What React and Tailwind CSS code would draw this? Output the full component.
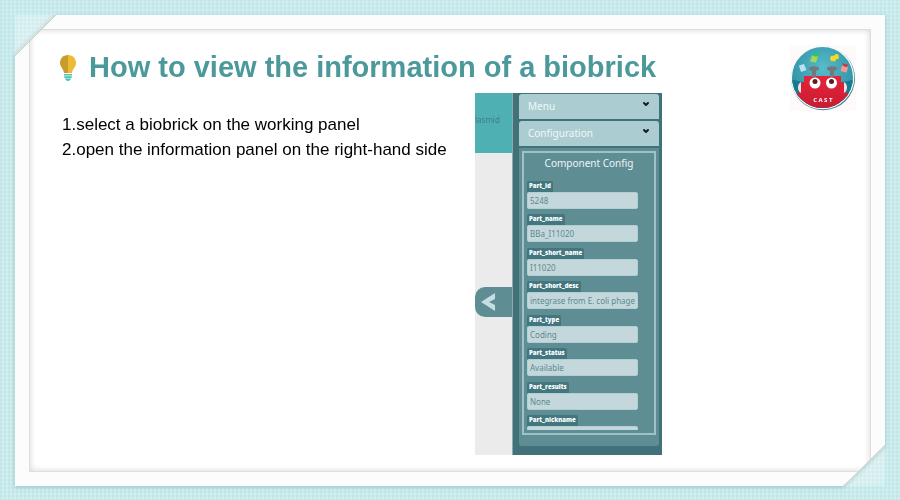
import React from "react";
import { ChevronDown } from "lucide-react";

const fields = [
  ["Part_id", "5248"],
  ["Part_name", "BBa_I11020"],
  ["Part_short_name", "I11020"],
  ["Part_short_desc", "integrase from E. coli phage lambda"],
  ["Part_type", "Coding"],
  ["Part_status", "Available"],
  ["Part_results", "None"],
  ["Part_nickname", ""],
];

function Bulb() {
  return (
    <svg className="h-[28px] w-[18px] shrink-0" viewBox="0 0 18 28" aria-hidden="true">
      <path d="M9 1C4 1 1 4.600 1 9c0 4 3.500 5.500 4 10h4z" fill="#c99d2c" />
      <path d="M9 1c5 0 8 3.600 8 8 0 4-3.500 5.500-4 10H9z" fill="#eeb933" />
      <path d="M5 20h8v1.600H5zM5 22.300h8l-.6 1.600H5.600zM6 24.600h6c-.5 1.500-1.500 2.400-3 2.400s-2.500-.9-3-2.400z" fill="#4cc3b2" />
    </svg>
  );
}

function Logo() {
  return (
    <svg className="h-[66px] w-[66px] shrink-0 bg-[#fefafa]" viewBox="0 0 66 66" role="img" aria-label="CAST">
      <defs>
        <radialGradient id="sky" cx="50%" cy="35%" r="65%">
          <stop offset="0" stopColor="#58bccb" />
          <stop offset="1" stopColor="#26899d" />
        </radialGradient>
        <linearGradient id="red" x1="0" y1="0" x2="0" y2="1">
          <stop offset="0" stopColor="#e42439" />
          <stop offset="1" stopColor="#c41a32" />
        </linearGradient>
        <clipPath id="disc"><circle cx="32.500" cy="32.500" r="30.500" /></clipPath>
      </defs>
      <circle cx="33" cy="33.300" r="32" fill="#41798c" />
      <circle cx="32.500" cy="32.500" r="31.800" fill="#f7fbfc" />
      <g clipPath="url(#disc)">
        <rect width="66" height="66" fill="url(#sky)" />
        <path d="M0 34Q33 44 66 34V66H0z" fill="#137c91" />
        <path d="M14 31h37v17h12v20H2V48h12z" fill="url(#red)" />
        <path d="M14 37v11h-3c-4-2-4-8 0-10zM51 37v11h3c4-2 4-8 0-10z" fill="#d92238" />
        <path d="M11 37c-4 2-4 9 0 11zM54 37c4 2 4 9 0 11z" fill="#f3dfe0" />
      </g>
      <path d="M19 22.500q5-2.500 10 0v2l-3 1.500v6h-4v-6l-3-1.500zM37 22.500q5-2.500 10 0v2l-3 1.500v6h-4v-6l-3-1.500z" fill="#74777b" />
      <path d="M9 20.500l5-1.500 2.500 6-5.500 2z" fill="#b9e0f5" />
      <path d="M22 10.500l6 1-2 6-6-1z" fill="#a3d65a" />
      <path d="M23 10c2-3 6-2 7 1l-3-1-1 2z" fill="#20cf4c" />
      <path d="M41 11l3.500-.5 1-1.500 3 .5.500 4-3 1-1 2-4-.5-1-3z" fill="#f4d927" />
      <path d="M52 20.500l6 2-1.500 5-6-1.500z" fill="#f59a97" />
      <path d="M52 18l3 1.500 3-.5-1.500 3-3-1z" fill="#e52835" />
      <circle cx="25" cy="38" r="5.500" fill="#fff" />
      <circle cx="41.500" cy="38" r="5.500" fill="#fff" />
      <circle cx="25" cy="36.500" r="2.500" fill="#5b201d" />
      <circle cx="41.500" cy="36.500" r="2.500" fill="#5b201d" />
      <text x="33.500" y="57" textAnchor="middle" fontFamily="Open Sans, sans-serif" fontWeight="700" fontSize="6" letterSpacing="1.500" fill="#fff">CAST</text>
    </svg>
  );
}

function Fold({ className }) {
  return (
    <svg className={className} viewBox="0 0 42 42" aria-hidden="true">
      <defs>
        <linearGradient id="fold" x1="0" y1="0" x2="1" y2="1">
          <stop offset="0" stopColor="#fff" stopOpacity=".25" />
          <stop offset=".4" stopColor="#fff" stopOpacity=".3" />
          <stop offset=".5" stopColor="#d3dcde" stopOpacity=".6" />
        </linearGradient>
      </defs>
      <path d="M0 0h42L0 42z" fill="url(#fold)" />
      <path d="M42 0L0 42" stroke="#cfcfd1" strokeWidth="1" />
    </svg>
  );
}

function Accordion({ title }) {
  return (
    <button className="flex h-[25px] w-full items-center justify-between rounded-t-[3px] bg-[#abcdd2] pr-2 pl-[9px] text-left text-[10px] text-[#f1f7f8]">
      <span>{title}</span>
      <ChevronDown className="mb-[5px] h-2 w-2.5 text-[#151d20]" strokeWidth={6} />
    </button>
  );
}

function AppPanel() {
  return (
    <section className="flex h-[362px] w-[187px] shrink-0 overflow-hidden bg-[#417179] font-['Noto_Sans','Open_Sans',sans-serif]">
      <div className="flex w-[37px] flex-col bg-[#ebebeb]">
        <div className="h-[60px] overflow-hidden bg-[#4fb0b3] pt-5 text-[8px] leading-[14px] text-[#3d7e84]">lasmid</div>
        <button aria-label="Collapse panel" className="mt-[134px] flex h-[30px] items-center rounded-l-[10px] bg-[#5f8d94] pl-[6px]">
          <svg className="h-[18px] w-[14px]" viewBox="0 0 14 18" aria-hidden="true">
            <path d="M14 0v6L8 9l6 3v6L0 9z" fill="#c6dde1" />
          </svg>
        </button>
      </div>
      <div className="flex min-w-0 flex-1 flex-col gap-[2px] border-l border-[#8fa9ae] pt-px pr-[3px] pb-[9px] pl-[6px]">
        <Accordion title="Menu" />
        <Accordion title="Configuration" />
        <div className="flex-1 rounded-b-[3px] bg-[#5f8d94] px-[3px] pt-[3px]">
          <div className="h-[284px] border-2 border-[#9fc2c7] px-[3px]">
            <h2 className="pt-[2px] text-center text-[10px] leading-4 text-[#edf5f6]">Component Config</h2>
            <form className="mt-[10px] flex h-[249px] flex-col justify-between overflow-hidden">
              {fields.map(([name, value], i) => (
                <div key={name} className={i === 7 ? "h-[15px] shrink-0 overflow-hidden" : "shrink-0"}>
                  <label htmlFor={name} className="block h-[11px] w-fit rounded-t-[2px] bg-[#437780] px-[2px] font-['Open_Sans',sans-serif] text-[6px] leading-[10px] font-extrabold text-white">{name}</label>
                  <input id={name} defaultValue={value} className="block h-[17px] w-[111px] rounded-[2px] border border-[#b0d0d4] bg-[#c4d8dc] px-[2px] text-[8px] leading-[14px] text-[#5c898f] outline-none" />
                </div>
              ))}
            </form>
          </div>
        </div>
      </div>
    </section>
  );
}

export default function App() {
  return (
    <div className="flex min-h-screen flex-col bg-[#d3f0f1] bg-[repeating-linear-gradient(0deg,#b5dfe355_0_2px,transparent_2px_4px),repeating-linear-gradient(90deg,#b0dce155_0_2px,transparent_2px_4px)] p-[15px]">
      <div className="relative flex flex-1 flex-col">
        <div className="flex flex-1 flex-col drop-shadow-[0_1px_2px_#648f9477]">
          <div className="flex flex-1 flex-col bg-[#fcfcfc] p-[14px] [clip-path:polygon(41px_0,100%_0,100%_calc(100%-40px),calc(100%-42px)_100%,0_100%,0_40px)]">
            <main className="flex flex-1 items-start justify-between border border-[#dedede] bg-white pt-[15px] pr-[14px] pb-4 pl-[29px] shadow-[inset_0_0_6px_#d4d4d4]">
              <div className="min-w-0 flex-1 font-['Liberation_Sans',Arial,sans-serif]">
                <div className="flex h-12 items-start gap-3">
                  <div className="pt-[9px]"><Bulb /></div>
                  <h1 className="pt-1 text-[29px] leading-9 font-bold whitespace-nowrap text-[#4c999c]">How to view the information of a biobrick</h1>
                </div>
                <div className="flex items-start gap-[31px]">
                  <ol className="w-[385px] shrink-0 pt-[19px] pl-[3px] text-[17px] leading-[25px] whitespace-nowrap text-black">
                    <li>1.select a biobrick on the working panel</li>
                    <li>2.open the information panel on the right-hand side</li>
                  </ol>
                  <AppPanel />
                </div>
              </div>
              <Logo />
            </main>
          </div>
        </div>
        <Fold className="absolute top-0 left-0 h-[41px] w-[41px]" />
        <Fold className="absolute right-0 bottom-0 h-[41px] w-[41px] rotate-180" />
      </div>
    </div>
  );
}
